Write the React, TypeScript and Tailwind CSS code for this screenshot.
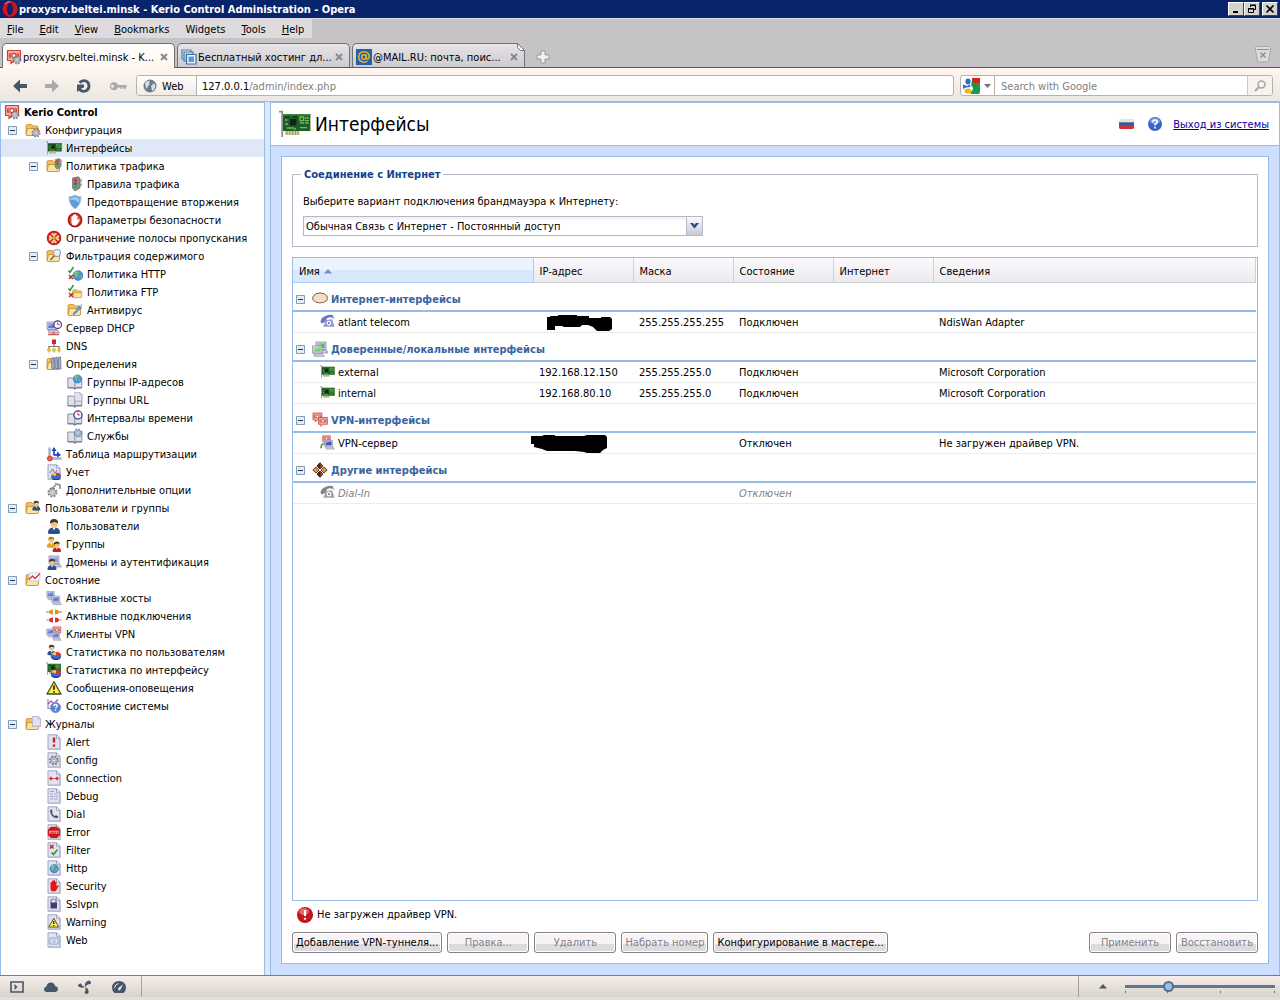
import { Fragment, useState } from "react";
import type { ReactNode } from "react";

/* ---------- icon parts, all on a 16x16 grid ---------- */

function Folder() {
  return (
    <g stroke="#c08a2e" strokeWidth=".8">
      <path d="M1 4q0-1.500 1.500-1.500h4l1.500 1.500h4q1 0 1 1v8H2.500Q1 13 1 12z" fill="#f0bf5c" />
      <path d="M1 13 2.500 6.500h11V12q0 1.500-1.500 1.500H2z" fill="#fbe3a0" />
    </g>
  );
}

function Page() {
  return (
    <g stroke="#9a9dbd" strokeWidth=".9">
      <path d="M2 .8h8.500L14 4.300v10.900H2z" fill="#e0e2f2" />
      <path d="M10.500.8v3.500H14z" fill="#fff" />
      <path d="M14 5v10.200H2.500" fill="none" stroke="#b9bbd4" strokeWidth="1.500" />
    </g>
  );
}

function Book() {
  return (
    <g stroke="#77798a" strokeWidth=".8">
      <path d="M.8 4h5l2 1 2-1h5v9.500h-5l-2 1-2-1h-5z" fill="#dfe0e8" />
      <path d="M7.800 5v9.500" />
      <path d="M.8 13.800h5l2 1.200 2-1.200h5" fill="none" strokeWidth="1.300" />
    </g>
  );
}

function Monitor({ fill = "#5f79e0" }: { fill?: string }) {
  return (
    <g>
      <path d="M1 2h10v7.500H1z" fill="#dcdde8" stroke="#7c7f98" strokeWidth=".7" />
      <path d="M2.200 3.200h7.600v5H2.200z" fill={fill} />
      <path d="M2.200 3.200h7.600l-7.600 3z" fill="#fff" opacity=".35" />
      <path d="M2 10h9.500l2 3H3z" fill="#c9cad6" stroke="#7c7f98" strokeWidth=".6" />
    </g>
  );
}

function Person({ body = "#2b4f8e", hair = "#3b3b33" }: { body?: string; hair?: string }) {
  return (
    <g>
      <path d="M2 15.500q-.5-6 6-6t6 6q-6 1.500-12 0z" fill={body} />
      <path d="m6.500 9.500 1.500 3 1.500-3z" fill="#fff" />
      <circle cx="8" cy="5.500" r="3.600" fill="#f3c07a" />
      <path d="M4 5.500Q3.500 1 8 1t4 4.500Q10 3.500 8 4T4 5.500z" fill={hair} />
    </g>
  );
}

function Globe() {
  return (
    <g>
      <circle cx="8" cy="8" r="6.500" fill="#4a90e8" stroke="#2660b8" strokeWidth=".8" />
      <path d="M3 6q2-4 6-3l1 2-3 1 1 2-2 3q-3-1-3-5zM10 8l3-1-1 4-2 1z" fill="#6cc65a" />
      <path d="M4 4q2-2 4-2-3 2-4 4z" fill="#fff" opacity=".6" />
    </g>
  );
}

function Clock() {
  return (
    <g>
      <circle cx="8" cy="8" r="6.500" fill="#fff" stroke="#3c3590" strokeWidth="2" />
      <path d="M8 4v4h3.500" fill="none" stroke="#d22" strokeWidth="1.500" />
    </g>
  );
}

function Gear({ fill = "#c4c6cc", stroke = "#7b7d84" }: { fill?: string; stroke?: string }) {
  return (
    <g>
      <circle cx="8" cy="8" r="5.600" fill="none" stroke={stroke} strokeWidth="3.400" strokeDasharray="2.400 2" />
      <circle cx="8" cy="8" r="4.800" fill={fill} stroke={stroke} strokeWidth=".9" />
      <circle cx="8" cy="8" r="1.800" fill="#fff" stroke={stroke} strokeWidth=".8" />
    </g>
  );
}

function Pie() {
  return (
    <g>
      <ellipse cx="8" cy="9.500" rx="7.500" ry="5.500" fill="#20398c" />
      <ellipse cx="8" cy="8" rx="7.500" ry="5" fill="#4468c8" />
      <path d="M8 8 1 6q2-3 7-3z" fill="#f3d34a" />
      <path d="M8 8V3q7 0 7.500 5z" fill="#e0342a" />
    </g>
  );
}

function Card() {
  return (
    <g>
      <path d="M0 1.800h1.600v12.700" fill="none" stroke="#8d8d96" strokeWidth=".9" />
      <path d="M2 3h13.700v8.500H2z" fill="#1f5f26" />
      <path d="M2 3h13.700v.8H2z" fill="#3c8a3c" />
      <path d="M3 11.500h7.200v2H3z" fill="#d6cf9c" />
      <path d="M4 11.500v2M5.400 11.500v2M6.800 11.500v2M8.200 11.500v2M9.500 11.500v2" stroke="#7f8450" strokeWidth=".4" />
      <path d="M5.500 5.500h3.200v3.200H5.500z" fill="#16211c" />
      <path d="M10.500 4.500h1.800v1.800h-1.800zM13 5h2M10.500 7.500h2M13 7.500h1.800M10.500 9.800h3.500M13 6.300h2M3 6h1.200M3 8h1.500M4 10h3.500M8 10v1" fill="none" stroke="#74b860" strokeWidth=".7" />
      <path d="M3 4.500h2M7 4.500h2" stroke="#0f3a16" strokeWidth=".7" />
    </g>
  );
}

function Kerio() {
  return (
    <g>
      <path d="M1.500 1.500h13v10H8L5 14.500v-3H1.500z" fill="#f1b0a8" stroke="#cf4037" strokeWidth="1.200" strokeLinejoin="round" />
      <path d="M4.500 4q-2 2.500 0 5M11.500 4q2 2.500 0 5" fill="none" stroke="#c93a33" strokeWidth="1.200" />
      <circle cx="8" cy="6.500" r="2.200" fill="#fff" stroke="#c93a33" strokeWidth="1.200" />
    </g>
  );
}

function Phone({ fill }: { fill: string }) {
  return (
    <g>
      <path d="M.5 8.500Q.5 3 8.500 1q5-.8 6 1l-1.500 2-3-.5-2.500 1-2 4-3.500 1.500z" fill={fill} />
      <path d="M6.500 6.500 13 5.500l2.500 8H3.500z" fill={fill} opacity=".75" />
      <circle cx="9.500" cy="9.700" r="2.500" fill="#fff" />
      <circle cx="9.500" cy="9.700" r="1.200" fill={fill} />
      <path d="M13 3.500q2.500-.5 2 2" fill="none" stroke={fill} strokeWidth=".7" />
    </g>
  );
}

function Hand({ fill }: { fill: string }) {
  return (
    <path
      d="M4.500 8V4.500q.8-1 1.400 0V3q.8-1 1.500 0v-.5q.8-1 1.600 0V4q.8-1 1.500 0v4.500l1.500-1.500q1.200 0 .6 1.200L10.500 12q-1 1.500-3 1.500-3 0-3-3z"
      fill={fill}
    />
  );
}

function Lights() {
  return (
    <g>
      <path d="m3.500 2 6-1.200 1.500 1.500V12l-5 3-2.500-3z" fill="#8b8e92" stroke="#55585c" strokeWidth=".6" />
      <circle cx="6.500" cy="4.200" r="1.900" fill="#e33b28" />
      <circle cx="6.500" cy="7.700" r="1.500" fill="#5b5e50" />
      <circle cx="6.500" cy="11" r="1.700" fill="#3fb143" />
      <path d="m11 4 2-1v2l-2 2M11 8l2-1v2l-2 2" fill="#9a9c9f" />
    </g>
  );
}

function Warning() {
  return (
    <g>
      <path d="M8 1.800 15 14H1z" fill="#f8ee4c" stroke="#4c4a25" strokeWidth="1.300" strokeLinejoin="round" />
      <path d="M8 5.500v4.300M8 11.200v1.500" stroke="#222" strokeWidth="1.700" />
    </g>
  );
}

function Marks() {
  return (
    <g fill="none" strokeWidth="1.500">
      <path d="m1.500 4.500 1.500 2 3.500-5.500" stroke="#2e9b33" />
      <path d="m2 9 4 4M6 9l-4 4" stroke="#c62828" />
    </g>
  );
}

const ICONS: Record<string, ReactNode> = {
  kerio: <><Kerio /><g transform="translate(6 6) scale(.62)"><Gear /></g></>,
  config: <><Folder /><g transform="translate(6 6) scale(.62)"><Gear /></g></>,
  card: <Card />,
  folderLights: <><Folder /><g transform="translate(6.500 0) scale(.75)"><Lights /></g></>,
  lights: <g transform="translate(2 0)"><Lights /></g>,
  shield: (
    <g>
      <path d="M8 1q3 2 6 1.500.5 8-6 12.500Q1.500 10.500 2 2.500 5 3 8 1z" fill="#5d9bd8" stroke="#b6c8da" />
      <path d="M8 2.500q2.500 1.500 4.500 1.500 0 2.500-1 5-3-4-8-3l-.3-2Q6 3.800 8 2.500z" fill="#9ccaf0" />
    </g>
  ),
  hand: (
    <g>
      <circle cx="8" cy="8" r="6.600" fill="#d94a42" stroke="#b81414" strokeWidth="1.600" />
      <Hand fill="#fff" />
    </g>
  ),
  limit: (
    <g>
      <circle cx="8" cy="8" r="6.300" fill="#f6e0b4" stroke="#cc1c1c" strokeWidth="2" />
      <path d="M3.500 3.500 12.500 12.500M12.500 3.500 3.500 12.500" stroke="#cc1c1c" strokeWidth="1.500" />
      <path d="M8 5.500 10.500 8 8 10.500 5.500 8z" fill="#d9a33a" />
      <path d="M8 2.500v2M8 11.500v2M2.500 8h2M11.500 8h2" stroke="#a8522a" />
    </g>
  ),
  filter: (
    <>
      <Folder />
      <circle cx="11" cy="5" r="3.500" fill="#e8f0fb" stroke="#9aa2b8" strokeWidth="1.200" />
      <path d="m8.500 7.500-4 4.500" stroke="#9a6a2a" strokeWidth="1.600" />
    </>
  ),
  http: <><g transform="translate(5 3.500) scale(.75)"><Globe /></g><Marks /></>,
  ftp: <><g transform="translate(5 4) scale(.72)"><Folder /></g><Marks /></>,
  antivirus: (
    <>
      <Folder />
      <path d="m6 12 6-7 1.500 1.500L7 12.500z" fill="#7fb4ec" stroke="#2c66b4" strokeWidth=".8" />
      <path d="m11 3.500 4 3M13 5l2-2.500" stroke="#7c94c8" strokeWidth="1.200" />
    </>
  ),
  dhcp: (
    <>
      <Monitor />
      <g transform="translate(7 0) scale(.58)"><Clock /></g>
      <path d="M2 14.500h11M7.500 12v3" stroke="#d9534f" strokeWidth="1.600" />
    </>
  ),
  dns: (
    <g>
      <path d="M8 5v4M3 11V8.500h10V11" fill="none" stroke="#787878" strokeWidth="1.200" />
      <path d="M6 1.500h4v4.500H6z" fill="#d8241d" />
      <path d="M3 9.500 4.800 12 3 14.500 1.200 12zM8 9.500l1.800 2.500L8 14.500 6.200 12zM13 9.500l1.800 2.500-1.800 2.500-1.800-2.500z" fill="#eccc28" stroke="#9c8420" strokeWidth=".4" />
    </g>
  ),
  definitions: (
    <>
      <Folder />
      <path d="m5 2.500 2.500-1 1 11H6zM8.500 2 11 1l1 11.500H9.500zM12 1.500l2.500-.5.500 12h-2.500z" fill="#a4aed2" stroke="#5f6890" strokeWidth=".7" />
    </>
  ),
  bookGlobe: <><Book /><g transform="translate(5.500 0) scale(.62)"><Globe /></g></>,
  bookPage: <><Book /><g transform="translate(6.500 0) scale(.6)"><Page /></g></>,
  bookClock: <><Book /><g transform="translate(6 0) scale(.62)"><Clock /></g></>,
  bookGear: <><Book /><g transform="translate(6 0) scale(.62)"><Gear fill="#a9c4e6" stroke="#6b8bb5" /></g></>,
  routing: (
    <g>
      <path d="M3.500 12V1.500M4 12.500h11.500" stroke="#a9adc4" strokeWidth="2.400" />
      <path d="M8 9.500V5" stroke="#1c3fd0" strokeWidth="1.600" />
      <path d="M5.500 5 8 1l2.500 4zM8 8h3V5.500L15 9l-4 2.500V9.800H8z" fill="#1c3fd0" />
      <circle cx="3.800" cy="12.500" r="2.500" fill="#ef5c5c" stroke="#b82828" strokeWidth=".7" />
    </g>
  ),
  accounting: <><Page /><path d="M4 9 6.500 5 9 9.500 11 6" fill="none" stroke="#777a99" /><g transform="translate(5 7) scale(.62)"><Pie /></g></>,
  options: (
    <>
      <g transform="translate(1 5) scale(.68)"><Gear fill="#d8d8da" stroke="#77777b" /></g>
      <path d="m4 8 6-5M9 1.500l5 1.500v4" fill="none" stroke="#8a8a8e" strokeWidth="1.600" />
    </>
  ),
  usersFolder: <><Folder /><g transform="translate(6 0) scale(.66)"><Person /></g></>,
  user: <Person />,
  groups: (
    <>
      <g transform="translate(-.500 0) scale(.72)"><Person body="#e2a31e" hair="#c07b12" /></g>
      <g transform="translate(5.200 4.800) scale(.7)"><Person body="#c71f1f" hair="#4a2a1a" /></g>
    </>
  ),
  domains: <><g transform="translate(2 0)"><Monitor fill="#8299e6" /></g><g transform="translate(0 4) scale(.75)"><Person /></g></>,
  state: <><Folder /><path d="M4 .8h11V9H4z" fill="#f3f4fb" stroke="#b9bccf" strokeWidth=".6" /><path d="M4 7.500 7.500 4 10 6.500 15 1.500" fill="none" stroke="#d03648" strokeWidth="1.300" /></>,
  hosts: <><g transform="translate(0 0) scale(.75)"><Monitor /></g><g transform="translate(5 4.500) scale(.78)"><Monitor /></g></>,
  connections: (
    <g>
      <path d="M0 4h4M12 4h4" stroke="#8a8a60" strokeWidth="1.100" />
      <path d="M3 4q0-2.500 4-2.500v5Q3 6.500 3 4zM13 4q0-2.500-4-2.500v5q4 0 4-2.500z" fill="#d99a1e" />
      <path d="M0 12h4M12 12h4" stroke="#e88a84" strokeWidth="1.100" />
      <path d="M3 12q0-2.500 4-2.500v5Q3 14.500 3 12zM13 12q0-2.500-4-2.500v5q4 0 4-2.500z" fill="#d9342b" />
    </g>
  ),
  vpnClients: (
    <>
      <g transform="translate(6 0) scale(.6)"><Kerio /></g>
      <g transform="translate(0 1.500) scale(.72)"><Monitor /></g>
      <g transform="translate(5.500 5) scale(.72)"><Monitor /></g>
    </>
  ),
  userStats: <><g transform="translate(0 0) scale(.7)"><Person /></g><g transform="translate(4.500 6) scale(.68)"><Pie /></g></>,
  cardStats: <><g transform="translate(0 -1) scale(.95)"><Card /></g><g transform="translate(4.500 6) scale(.68)"><Pie /></g></>,
  warning: <Warning />,
  health: (
    <>
      <path d="M2 1v9.500h7" fill="none" stroke="#8b8fb0" strokeWidth="1.200" />
      <path d="m2 6 3-3 3 2.500 4-4" fill="none" stroke="#b03cae" strokeWidth="1.200" />
      <circle cx="9.500" cy="9.500" r="5.200" fill="#5a80d2" stroke="#8ea6e0" />
      <path d="M7.700 8.200q0-1.700 1.800-1.700t1.800 1.500q0 1-1.800 2M9.500 11.300v1.400" fill="none" stroke="#fff" strokeWidth="1.400" />
    </>
  ),
  logs: <><Folder /><g transform="translate(6 0) scale(.68)"><Page /></g></>,
  alert: <><Page /><path d="M8 3.500v5M8 10.500v2.300" stroke="#d01818" strokeWidth="2.300" /></>,
  logConfig: <><Page /><g transform="translate(2.500 3) scale(.68)"><Gear /></g></>,
  connection: <><Page /><path d="M2.500 8.500h11" stroke="#d8504a" strokeWidth=".8" /><path d="m4.200 6.300 3 2.200-3 2.200zM11.800 6.300l-3 2.200 3 2.200z" fill="#d8241d" /></>,
  debug: <><Page /><path d="M4 6h3M8 6h4M4 8.500h4M9 8.500h3M4 11h3M8 11h4M4 3.500h4" stroke="#a0a6cf" /></>,
  dial: <><Page /><path d="M4 5q0-2 2-1.500L6.500 6 6 7q1 2.500 3 3l1-.8 2.300 1q0 2-1.800 2Q5 11.500 4 5z" fill="#4f5361" /></>,
  error: (
    <>
      <Page />
      <path d="M5 2.800h6l3.200 3V11L11 14H5l-3.200-3V5.800z" fill="#cb1717" />
      <path d="M3.500 7v3M5 7v3M7 7v3M9 7v3M10.500 7v3M12.300 7v3M3.500 7.200h9" stroke="#f7c8c8" strokeWidth=".7" />
    </>
  ),
  logFilter: <><Page /><path d="m4 3 3.500 3.500M7.500 3 4 6.500" stroke="#c62828" strokeWidth="1.500" /><path d="m5.500 10.500 2 2 4-5" fill="none" stroke="#2e9b33" strokeWidth="1.700" /></>,
  logHttp: <><Page /><g transform="translate(3 3.500) scale(.65)"><Globe /></g></>,
  security: <><Page /><Hand fill="#e01515" /></>,
  sslvpn: <><Page /><path d="M5 7V5q0-2 2.500-2T10 5v2" fill="none" stroke="#7b7fa0" strokeWidth="1.200" /><path d="M4.500 6.500h6.500v6H4.500z" fill="#3c406e" /></>,
  logWarning: <><Page /><g transform="translate(2 3) scale(.72)"><Warning /></g></>,
  logWeb: <><Page /><path d="M4 6h8v6H4z" fill="#fff" stroke="#7e9ad0" /><path d="M5.500 8h5M5.500 10h5" stroke="#7e9ad0" /></>,
  cloud: (
    <path
      d="M3 4Q3.500 1.800 6 2.500q2-1.500 4 0 3-.5 3.500 1.500 2.300.7 1.800 3.500.2 2.500-2.300 3-1.500 1.800-3.500 1-2 1-3.500 0-2.500.5-3.500-1.500Q.2 9 .7 7 .8 4.500 3 4z"
      fill="#f8dcc4"
      stroke="#7d6252"
    />
  ),
  trusted: (
    <>
      <g transform="translate(3 -1)"><Monitor fill="#58b868" /></g>
      <g transform="translate(-.500 3) scale(.95)"><Monitor fill="#7cd082" /></g>
    </>
  ),
  vpnGroup: <><g transform="translate(0 0) scale(.68)"><Kerio /></g><g transform="translate(5.500 4.500) scale(.68)"><Kerio /></g></>,
  vpnServer: <><g transform="translate(2 0) scale(.62)"><Kerio /></g><g transform="translate(4 4) scale(.85)"><Monitor fill="#3b52d4" /></g><path d="M1 14q0-4 3-5" fill="none" stroke="#4a9a4a" strokeWidth="1.600" /></>,
  other: (
    <g stroke="#3a1a10" strokeWidth=".8">
      <path d="M8 .8 11 4 8 7 5 4zM8 9l3 3-3 3.200L5 12z" fill="#b8442a" />
      <path d="M4 5l3 3-3 3L.8 8zM12 5l3.200 3L12 11 9 8z" fill="#e2983c" />
      <path d="M8 .8V7L5 4zM8 9v6.200L5 12z" fill="#5a2418" />
    </g>
  ),
  phone: <Phone fill="#6a76c4" />,
  phoneOff: <Phone fill="#858585" />,
};

function Icon({ name, className = "size-4" }: { name: string; className?: string }) {
  return (
    <svg viewBox="0 0 16 16" className={`${className} shrink-0`} aria-hidden="true">
      {ICONS[name]}
    </svg>
  );
}

function Toggle() {
  return (
    <svg viewBox="0 0 9 9" className="size-[9px] shrink-0" aria-hidden="true">
      <path d="M.5.5h8v8h-8z" fill="#e4ecf5" stroke="#7f9db9" />
      <path d="M2 4.500h5" stroke="#22324a" />
    </svg>
  );
}

/* ---------- data ---------- */

type Node = { level: number; icon: string; label: string; open?: boolean };

const TREE: Node[] = [
  { level: 1, icon: "config", label: "Конфигурация", open: true },
  { level: 2, icon: "card", label: "Интерфейсы" },
  { level: 2, icon: "folderLights", label: "Политика трафика", open: true },
  { level: 3, icon: "lights", label: "Правила трафика" },
  { level: 3, icon: "shield", label: "Предотвращение вторжения" },
  { level: 3, icon: "hand", label: "Параметры безопасности" },
  { level: 2, icon: "limit", label: "Ограничение полосы пропускания" },
  { level: 2, icon: "filter", label: "Фильтрация содержимого", open: true },
  { level: 3, icon: "http", label: "Политика HTTP" },
  { level: 3, icon: "ftp", label: "Политика FTP" },
  { level: 3, icon: "antivirus", label: "Антивирус" },
  { level: 2, icon: "dhcp", label: "Сервер DHCP" },
  { level: 2, icon: "dns", label: "DNS" },
  { level: 2, icon: "definitions", label: "Определения", open: true },
  { level: 3, icon: "bookGlobe", label: "Группы IP-адресов" },
  { level: 3, icon: "bookPage", label: "Группы URL" },
  { level: 3, icon: "bookClock", label: "Интервалы времени" },
  { level: 3, icon: "bookGear", label: "Службы" },
  { level: 2, icon: "routing", label: "Таблица маршрутизации" },
  { level: 2, icon: "accounting", label: "Учет" },
  { level: 2, icon: "options", label: "Дополнительные опции" },
  { level: 1, icon: "usersFolder", label: "Пользователи и группы", open: true },
  { level: 2, icon: "user", label: "Пользователи" },
  { level: 2, icon: "groups", label: "Группы" },
  { level: 2, icon: "domains", label: "Домены и аутентификация" },
  { level: 1, icon: "state", label: "Состояние", open: true },
  { level: 2, icon: "hosts", label: "Активные хосты" },
  { level: 2, icon: "connections", label: "Активные подключения" },
  { level: 2, icon: "vpnClients", label: "Клиенты VPN" },
  { level: 2, icon: "userStats", label: "Статистика по пользователям" },
  { level: 2, icon: "cardStats", label: "Статистика по интерфейсу" },
  { level: 2, icon: "warning", label: "Сообщения-оповещения" },
  { level: 2, icon: "health", label: "Состояние системы" },
  { level: 1, icon: "logs", label: "Журналы", open: true },
  { level: 2, icon: "alert", label: "Alert" },
  { level: 2, icon: "logConfig", label: "Config" },
  { level: 2, icon: "connection", label: "Connection" },
  { level: 2, icon: "debug", label: "Debug" },
  { level: 2, icon: "dial", label: "Dial" },
  { level: 2, icon: "error", label: "Error" },
  { level: 2, icon: "logFilter", label: "Filter" },
  { level: 2, icon: "logHttp", label: "Http" },
  { level: 2, icon: "security", label: "Security" },
  { level: 2, icon: "sslvpn", label: "Sslvpn" },
  { level: 2, icon: "logWarning", label: "Warning" },
  { level: 2, icon: "logWeb", label: "Web" },
];

const INDENT: Record<number, string> = { 1: "pl-[7px]", 2: "pl-7", 3: "pl-[49px]" };

type Row = { icon: string; name: string; ip?: ReactNode; mask?: string; state: string; info?: string; off?: boolean };

const GROUPS: { icon: string; title: string; rows: Row[] }[] = [
  {
    icon: "cloud",
    title: "Интернет-интерфейсы",
    rows: [
      {
        icon: "phone",
        name: "atlant telecom",
        ip: (
          <svg viewBox="0 0 66 16" className="ml-2 h-4 w-[66px]" aria-hidden="true">
            <path d="M0 2h3V1h8V0h19v1h12v2h12V2h9l2 2v10l-3 2H50l-4-4-5-2h-6l-2 2H17l-2-1H8v4H0z" fill="#000" />
          </svg>
        ),
        mask: "255.255.255.255",
        state: "Подключен",
        info: "NdisWan Adapter",
      },
    ],
  },
  {
    icon: "trusted",
    title: "Доверенные/локальные интерфейсы",
    rows: [
      { icon: "card", name: "external", ip: "192.168.12.150", mask: "255.255.255.0", state: "Подключен", info: "Microsoft Corporation" },
      { icon: "card", name: "internal", ip: "192.168.80.10", mask: "255.255.255.0", state: "Подключен", info: "Microsoft Corporation" },
    ],
  },
  {
    icon: "vpnGroup",
    title: "VPN-интерфейсы",
    rows: [
      {
        icon: "vpnServer",
        name: "VPN-сервер",
        ip: (
          <svg viewBox="0 0 77 18" className="-ml-2 h-[18px] w-[77px]" aria-hidden="true">
            <path d="M0 1h11l2-1h10l2 1h28l3-1h18l2 2v11l-4 2-3 3H56l-3-1-9-1H16l-5-2-8-2V9H0z" fill="#000" />
          </svg>
        ),
        state: "Отключен",
        info: "Не загружен драйвер VPN.",
      },
    ],
  },
  {
    icon: "other",
    title: "Другие интерфейсы",
    rows: [{ icon: "phoneOff", name: "Dial-In", state: "Отключен", off: true }],
  },
];

const COLUMNS = ["IP-адрес", "Маска", "Состояние", "Интернет", "Сведения"];
const MENU = ["File", "Edit", "View", "Bookmarks", "Widgets", "Tools", "Help"];

/* ---------- browser chrome ---------- */

function TitleBar() {
  const button =
    "flex h-[14px] w-4 items-center justify-center border border-t-white border-l-white border-r-[#404040] border-b-[#404040] bg-[#d6d3ce]";
  return (
    <header className="flex h-[18px] items-center bg-[#08246b] pr-0.5 pl-0.5 text-white">
      <svg viewBox="0 0 16 16" className="size-4 shrink-0" aria-hidden="true">
        <ellipse cx="8" cy="8" rx="7.500" ry="8" fill="#d3131b" />
        <ellipse cx="8" cy="8" rx="3" ry="6" fill="#08246b" />
        <path d="M3 3q2-2.500 5-2.500" stroke="#f38a8a" fill="none" />
      </svg>
      <h1 className="ml-px flex-1 pt-0.5 text-[11px] font-bold">proxysrv.beltei.minsk - Kerio Control Administration - Opera</h1>
      <button aria-label="Minimize" className={button}>
        <svg viewBox="0 0 10 10" className="size-[10px]"><path d="M2 8h5" stroke="#000" strokeWidth="2" /></svg>
      </button>
      <button aria-label="Restore" className={button}>
        <svg viewBox="0 0 10 10" className="size-[10px]">
          <path d="M3.500 3V1.500h5v4H7M3 1h6M1.500 4.500h5v4h-5zM1 5h6" fill="none" stroke="#000" />
        </svg>
      </button>
      <button aria-label="Close" className={`${button} ml-0.5`}>
        <svg viewBox="0 0 10 10" className="size-[10px]"><path d="m1.500 1.500 7 7M8.500 1.500l-7 7" stroke="#000" strokeWidth="1.600" /></svg>
      </button>
    </header>
  );
}

function MenuBar() {
  return (
    <nav className="flex h-5 border-t border-[#e0dde0] bg-[#c6c3c6]">
      <div className="flex items-center bg-[#dedbde]">
        {MENU.map((m) => {
          const at = m === "Widgets" ? 3 : 0;
          return (
            <button key={m} className="px-2 pt-0.5 first:pl-[7px]">
              {m.slice(0, at)}
              <u className="underline-offset-1">{m[at]}</u>
              {m.slice(at + 1)}
            </button>
          );
        })}
      </div>
    </nav>
  );
}

function TabIcon({ kind }: { kind: string }) {
  if (kind === "kerio") return <Icon name="kerio" />;
  return (
    <svg viewBox="0 0 16 16" className="size-4 shrink-0" aria-hidden="true">
      {kind === "hosting" ? (
        <g strokeWidth="1.200">
          <path d="M1 1h9v9H1z" fill="#d6e8f8" stroke="#4a7cb8" />
          <path d="M3 3h9v9H3z" fill="#b8dca8" stroke="#4a7cb8" />
          <path d="M5.500 5.500H15V15H5.500z" fill="#eef5fc" stroke="#3a6cac" />
          <path d="M7.500 7.500H13V13H7.500z" fill="#5c9ade" />
        </g>
      ) : (
        <g fill="none" stroke="#f0b02c" strokeWidth="1.500">
          <path d="M0 0h16v16H0z" fill="#1f62a8" stroke="none" />
          <circle cx="8" cy="8" r="2.300" />
          <path d="M10.300 5.500v3.800q1.700 1.700 2.900-.8Q13.500 2.800 8 2.800T2.800 8Q3 13.200 8 13.200q2 0 3.500-1" />
        </g>
      )}
    </svg>
  );
}

function Tabs() {
  const tabs = [
    { kind: "kerio", label: "proxysrv.beltei.minsk - K..." },
    { kind: "hosting", label: "Бесплатный хостинг дл..." },
    { kind: "mail", label: "@MAIL.RU: почта, поис..." },
  ];
  return (
    <div className="flex h-[30px] items-end border-b border-[#5a5a5a] bg-[#c6c3c6] pl-0.5">
      <div role="tablist" className="flex h-6 gap-[2px]">
        {tabs.map((t, i) => (
          <div
            key={t.kind}
            className={`relative flex w-[173px] items-center rounded-t-[5px] border border-b-0 border-[#737173] pt-0.5 pr-1.5 pl-[3px] ${
              i === 0 ? "-mb-px h-[25px] bg-linear-to-b from-white to-[#fff7ef]" : "bg-linear-to-b from-[#e7e3e7] to-[#ceccce]"
            }`}
          >
            <TabIcon kind={t.kind} />
            <button role="tab" aria-selected={i === 0} className="ml-px flex-1 pt-0.5 text-left whitespace-nowrap">
              {t.label}
            </button>
            <button aria-label="Close tab" className="shrink-0">
              <svg viewBox="0 0 8 8" className="size-2"><path d="m1 1 6 6M7 1 1 7" stroke="#848a92" strokeWidth="2" /></svg>
            </button>
            {/* folded corner of a page that was not read yet */}
            {t.kind === "mail" && (
              <svg viewBox="0 0 8 8" className="absolute -top-px -right-px size-2" aria-hidden="true">
                <path d="M0 0h8v8z" fill="#c6c3c6" />
                <path d="M.5.5v4l3 3h4z" fill="#fff" stroke="#737173" />
              </svg>
            )}
          </div>
        ))}
      </div>
      <button aria-label="New tab" className="mb-[3px] ml-[11px]">
        <svg viewBox="0 0 14 14" className="size-[14px]">
          <path d="M5 1h4v4h4v4H9v4H5V9H1V5h4z" fill="#f4f3f4" stroke="#9c9a9c" strokeLinejoin="round" />
        </svg>
      </button>
      <button aria-label="Closed tabs" className="mr-2 mb-1 ml-auto">
        <svg viewBox="0 0 18 18" className="size-[18px]">
          <path d="M1.500 2.500q0-1 1-1h13q1 0 1 1V5l-2 11q0 1-1 1H4.500q-1 0-1-1L1.500 5z" fill="#dcdadc" stroke="#a8a6a8" />
          <path d="M3 4.500h12" stroke="#8e8c8e" />
          <path d="m6.500 7.500 5 5M11.500 7.500l-5 5" stroke="#8e8c8e" strokeWidth="1.500" />
        </svg>
      </button>
    </div>
  );
}

function Toolbar() {
  return (
    <div className="flex h-[34px] items-center border-b border-[#bdb8b5] bg-linear-to-b from-[#fff5ee] to-[#ebe7e1] pt-0.5 pr-[7px] pl-3">
      <div className="flex items-center gap-4">
        <button aria-label="Back">
          <svg viewBox="0 0 16 16" className="size-4"><path d="M1 8 8 1.500V6h7v4H8v4.500z" fill="#45576b" /></svg>
        </button>
        <button aria-label="Forward">
          <svg viewBox="0 0 16 16" className="size-4"><path d="M15 8 8 1.500V6H1v4h7v4.500z" fill="#a9abae" /></svg>
        </button>
        <button aria-label="Reload">
          <svg viewBox="0 0 16 16" className="size-4">
            <path d="M3.500 4.800Q6 2 9.500 2.800 13 4 13 8t-3.500 5Q6 14 3.500 11.500" fill="none" stroke="#45576b" strokeWidth="2.800" />
            <path d="M1 10V7l1-.5h6L8 9l-1 1z" fill="#45576b" />
            <path d="M1 6.500V14l6.500-5z" fill="#45576b" />
          </svg>
        </button>
        <button aria-label="Wand">
          <svg viewBox="0 0 20 16" className="h-4 w-5">
            <path d="M6 4.200a4.200 4 0 1 0 .01 0zm-1.500 2.500a1.500 1.500 0 1 1-.01 0z" fill="#a9abae" fillRule="evenodd" />
            <path d="M9 7h9l1 1-1 1.500h-.5V11h-2V9.500h-1.500V11h-1.500V9.500H9z" fill="#a9abae" />
          </svg>
        </button>
      </div>
      <form className="ml-2 flex h-[21px] flex-1 overflow-hidden rounded-[3px] border border-[#b5b2b0] bg-white" onSubmit={(e) => e.preventDefault()}>
        <button type="button" className="flex w-[60px] items-center gap-[5px] border-r border-[#b5b2b0] bg-linear-to-b from-white to-[#f0ebe6] pl-1.5">
          <svg viewBox="0 0 14 14" className="size-[14px]" aria-hidden="true">
            <circle cx="7" cy="7" r="6.500" fill="#6c7a88" />
            <path d="M2 4q2-3 5-2L6 4l1 1-2 2-1 3q-2-2-2-6zM8 7l3-3 1.500 3L11 11l-2 1z" fill="#d6dde2" />
          </svg>
          <span className="pt-0.5">Web</span>
        </button>
        <div className="relative flex-1">
          {/* the host part is drawn darker than the path */}
          <div aria-hidden="true" className="pointer-events-none absolute inset-0 flex items-center px-[5px] pt-0.5 text-[#808080]">
            <span className="text-black">127.0.0.1</span>/admin/index.php
          </div>
          <input aria-label="Address" defaultValue="127.0.0.1/admin/index.php" className="block h-full w-full bg-transparent px-[5px] pt-0.5 text-transparent caret-black outline-none" />
        </div>
      </form>
      <form className="ml-[6px] flex h-[21px] w-[313px] overflow-hidden rounded-[3px] border border-[#b5b2b0] bg-white" onSubmit={(e) => e.preventDefault()}>
        <button type="button" aria-label="Search engine" className="flex w-[34px] items-center gap-1 border-r border-[#b5b2b0] pl-0.5">
          <svg viewBox="0 0 17 16" className="h-4 w-[17px]">
            <path d="M9 0h8v14q0 2-2 2H7l3-6-2-3z" fill="#1a9a48" />
            <path d="M9 0h8v5h-7z" fill="#dd1f22" />
            <path d="M0 0h9L8 8l2 3-3 5H0z" fill="#fff" />
            <ellipse cx="5" cy="3.500" rx="2.600" ry="3" fill="#2a6cc8" />
            <path d="M0 6.500 4 8l3-1.500L7.500 9 3 9.500 0 11z" fill="#2a6cc8" />
            <ellipse cx="5" cy="13" rx="3.600" ry="2.500" fill="#f2b21c" />
          </svg>
          <svg viewBox="0 0 7 4" className="h-1 w-[7px]"><path d="M0 0h7L3.500 4z" fill="#737173" /></svg>
        </button>
        <input aria-label="Search with Google" placeholder="Search with Google" className="min-w-0 flex-1 px-1.5 pt-0.5 outline-none placeholder:text-[#808080]" />
        <button aria-label="Search" className="flex w-[25px] items-center justify-center border-l border-[#cfc8c4] bg-[#f8f2ee]">
          <svg viewBox="0 0 12 12" className="size-3"><g fill="none" stroke="#a9a6a4" strokeWidth="1.500"><circle cx="7.500" cy="4.500" r="3.500" /><path d="M5 7 1 11" strokeWidth="2" /></g></svg>
        </button>
      </form>
    </div>
  );
}

function StatusBar() {
  const [zoom, setZoom] = useState(27);
  const icon = "size-[14px]";
  return (
    <footer className="flex h-[25px] items-stretch border-t border-[#7b7d84] border-b-3 border-b-[#e2dfda] bg-linear-to-b from-[#f5eeea] to-[#d9d4cb]">
      <div className="flex w-[142px] items-center gap-5 border-r border-[#a5a29c] pl-2.5">
        <button aria-label="Panels">
          <svg viewBox="0 0 14 14" className={icon}><path d="M1 2h12v10H1z" fill="none" stroke="#45576b" strokeWidth="1.600" /><path d="m4.500 4 3 3-3 3z" fill="#45576b" /></svg>
        </button>
        <button aria-label="Link">
          <svg viewBox="0 0 14 14" className={icon}><path d="M3 12Q0 12 0 9.300 0 7 2.500 6.500 3 2.500 7 2.500q3.500 0 4 3.500 3 .5 3 3T11.500 12z" fill="#45576b" /></svg>
        </button>
        <button aria-label="Unite">
          <svg viewBox="0 0 14 14" className={icon}>
            <path d="M7 7Q6 2 11 .5q3 1 1.500 3.500Q9 4 7 7q-4 2-7-1 0-3 3-2.500Q4 6.500 7 7q4 1 3.500 6-3 2-4-.500Q8.500 10 7 7z" fill="#45576b" />
          </svg>
        </button>
        <button aria-label="Turbo">
          <svg viewBox="0 0 14 14" className={icon}><path d="M2.500 13Q0 11 0 7.500 .5 1 7 1t7 6.500Q14 11 11.500 13z" fill="#45576b" /><path d="M6 9.500q-.5-1.500 5-5-2.500 6-4 6z" fill="#eee8e4" /><path d="M2.500 8Q3 4 6.500 3.500" stroke="#eee8e4" fill="none" /></svg>
        </button>
      </div>
      <div className="ml-auto flex items-center border-l border-[#a5a29c] pr-[5px] pl-5">
        <button aria-label="View options">
          <svg viewBox="0 0 8 5" className="h-[5px] w-2"><path d="M0 4.500 4 0l4 4.500z" fill="#45576b" /></svg>
        </button>
        <div className="relative ml-[18px] flex w-[150px] items-center">
          <svg viewBox="0 0 150 2" className="absolute top-[10px] left-0 h-0.5 w-full" aria-hidden="true">
            <path d="M.5 0v2M42.500 0v2M95.500 0v2M149.500 0v2" stroke="#6b6b6b" />
          </svg>
          <input
            type="range"
            aria-label="Zoom"
            value={zoom}
            onChange={(e) => setZoom(Number(e.target.value))}
            className="relative h-3 w-full appearance-none bg-transparent [&::-webkit-slider-runnable-track]:h-[3px] [&::-webkit-slider-runnable-track]:bg-[#5f7893] [&::-webkit-slider-thumb]:-mt-1 [&::-webkit-slider-thumb]:size-[11px] [&::-webkit-slider-thumb]:appearance-none [&::-webkit-slider-thumb]:rounded-full [&::-webkit-slider-thumb]:border-2 [&::-webkit-slider-thumb]:border-[#4f6f93] [&::-webkit-slider-thumb]:bg-[#9dbfe0]"
          />
        </div>
      </div>
    </footer>
  );
}

/* ---------- administration page ---------- */

function Sidebar() {
  const [selected, setSelected] = useState("Интерфейсы");
  return (
    <aside className="w-[265px] shrink-0 border border-b-0 border-[#99bbe8] bg-white">
      <div className="flex h-[18px] items-center gap-1 pl-[3px] font-bold">
        <Icon name="kerio" />
        <span className="pt-0.5">Kerio Control</span>
      </div>
      <ul>
        {TREE.map((n) => (
          <li key={n.label}>
            <button
              onClick={() => setSelected(n.label)}
              className={`flex h-[18px] w-full items-center text-left whitespace-nowrap ${INDENT[n.level]} ${
                n.label === selected ? "bg-[#dfe8f6]" : ""
              }`}
            >
              <span className="w-[17px] shrink-0">{n.open && <Toggle />}</span>
              <Icon name={n.icon} className="mr-1 size-4" />
              <span className="pt-0.5">{n.label}</span>
            </button>
          </li>
        ))}
      </ul>
    </aside>
  );
}

function PushButton({ children, disabled }: { children: ReactNode; disabled?: boolean }) {
  return (
    <button
      disabled={disabled}
      className="h-[21px] min-w-[82px] rounded-[3px] border border-[#848284] bg-linear-to-b from-[#f7f3f7] from-55% to-[#dedbde] to-60% px-[3px] text-center whitespace-nowrap inset-ring inset-ring-white disabled:text-[#848284]"
    >
      {children}
    </button>
  );
}

function InterfaceTable() {
  return (
    <table className="w-full table-fixed border-collapse text-left">
      <colgroup>
        <col className="w-60" />
        <col className="w-[100px]" />
        <col className="w-[100px]" />
        <col className="w-[100px]" />
        <col className="w-[100px]" />
        <col />
      </colgroup>
      <thead>
        <tr className="h-6">
          <th className="border-r border-b border-[#aaccf6] bg-linear-to-b from-[#ebf3fd] from-50% to-[#d9e8fb] to-50% px-1.5 pt-1 font-normal">
            <span className="flex items-center gap-1">
              Имя
              <svg viewBox="0 0 8 5" className="h-[5px] w-2" aria-hidden="true"><path d="M0 4.500 4 0l4 4.500z" fill="#6593cf" /></svg>
            </span>
          </th>
          {COLUMNS.map((c) => (
            <th key={c} className="border-r border-b border-[#d0d0d0] bg-linear-to-b from-[#fbf9fc] to-[#ebeaee] px-1.5 pt-1 font-normal">
              {c}
            </th>
          ))}
        </tr>
      </thead>
      <tbody>
        {GROUPS.map((g) => (
          <Fragment key={g.title}>
            <tr className="h-[29px]">
              <th colSpan={6} className="border-b-2 border-[#99bbe8] pt-1.5 pl-[3px] font-bold text-[#3764a0]">
                <span className="flex items-center">
                  <Toggle />
                  <Icon name={g.icon} className="mr-[3px] ml-[7px] size-4" />
                  <span className="pt-0.5">{g.title}</span>
                </span>
              </th>
            </tr>
            {g.rows.map((r) => (
              <tr key={r.name} className={`h-[21px] border-b border-[#ededed] ${r.off ? "text-[#808080] italic" : ""}`}>
                <td className="pl-[27px]">
                  <span className="flex items-center gap-[3px]">
                    <Icon name={r.icon} className="size-[15px]" />
                    <span className="pt-0.5">{r.name}</span>
                  </span>
                </td>
                <td className="px-1.5 pt-0.5 whitespace-nowrap">
                  <div className="flex h-4 items-center">{r.ip}</div>
                </td>
                <td className="px-1.5 pt-0.5">{r.mask}</td>
                <td className="px-1.5 pt-0.5">{r.state}</td>
                <td />
                <td className="px-1.5 pt-0.5">{r.info}</td>
              </tr>
            ))}
          </Fragment>
        ))}
      </tbody>
    </table>
  );
}

function Main() {
  return (
    <main className="flex min-w-0 flex-1 flex-col border border-b-0 border-[#99bbe8] bg-[#cddeff]">
      <div className="flex h-[43px] items-center border-b border-[#99bbe8] bg-white pr-2.5 pl-2">
        <Icon name="card" className="size-8" />
        <h2 className="ml-1 flex-1 text-[19px]">Интерфейсы</h2>
        <button aria-label="Language">
          <svg viewBox="0 0 15 10" className="h-2.5 w-[15px]">
            <rect width="15" height="10" rx="1.500" fill="#e4e4e4" />
            <path d="M0 3.300h15v3.400H0z" fill="#2d5c9c" />
            <path d="M0 6h15v2.600q0 1.400-1.400 1.400H1.400Q0 10 0 8.600z" fill="#d03038" />
          </svg>
        </button>
        <button aria-label="Help" className="ml-[14px]">
          <svg viewBox="0 0 14 14" className="size-[14px]">
            <circle cx="7" cy="7" r="7" fill="#3566c8" />
            <ellipse cx="7" cy="4" rx="5" ry="3" fill="#7ea4ec" />
            <path d="M4.800 5.200q0-2.200 2.200-2.200t2.200 1.900q0 1.300-2.200 2.300v1.300M7 9.700v1.700" fill="none" stroke="#fff" strokeWidth="1.600" />
          </svg>
        </button>
        <a href="#logout" className="ml-[11px] pt-0.5 text-[#00009c] underline">Выход из системы</a>
      </div>

      <section className="m-2.5 mb-[11px] flex flex-1 flex-col border border-[#99bbe8] bg-white p-2.5">
        <fieldset className="border border-[#b5b8c8] px-2.5 pb-2.5">
          <legend className="ml-[-2px] h-[14px] px-[3px] pt-px font-bold text-[#15428b]">Соединение с Интернет</legend>
          <label htmlFor="link-type" className="mt-3.5 block">
            Выберите вариант подключения брандмауэра к Интернету:
          </label>
          <div className="relative mt-[7px] h-5 w-[400px] max-w-full">
            <select id="link-type" className="block h-full w-full appearance-none border border-[#b5b8c8] bg-linear-to-b from-[#eeeeee] from-0% to-white to-25% pt-0.5 pr-5 pl-0.5 outline-none">
              <option>Обычная Связь с Интернет - Постоянный доступ</option>
            </select>
            <span className="pointer-events-none absolute top-px right-px bottom-px flex w-4 items-center justify-center border-l border-[#b5b8c8] bg-linear-to-b from-[#fafafc] to-[#c8cad4]">
              <svg viewBox="0 0 9 6" className="h-1.5 w-[9px]" aria-hidden="true"><path d="M0 0h3l1.500 2L6 0h3L4.500 5.500z" fill="#24477f" /></svg>
            </span>
          </div>
        </fieldset>

        <div className="mt-2.5 flex-1 border border-[#99bbe8] pr-px">
          <InterfaceTable />
        </div>

        <p className="mt-[5px] flex h-[18px] items-center gap-1 pl-[5px]">
          <svg viewBox="0 0 16 16" className="size-4" aria-hidden="true">
            <circle cx="8" cy="8" r="8" fill="#c0161c" />
            <ellipse cx="7" cy="4.500" rx="5" ry="3.500" fill="#e0666a" />
            <path d="M8 3v6M8 10.800v2" stroke="#fff" strokeWidth="2.200" />
          </svg>
          Не загружен драйвер VPN.
        </p>
        <div className="mt-2 flex gap-[5px]">
          <PushButton>Добавление VPN-туннеля...</PushButton>
          <PushButton disabled>Правка...</PushButton>
          <PushButton disabled>Удалить</PushButton>
          <PushButton disabled>Набрать номер</PushButton>
          <PushButton>Конфигурирование в мастере...</PushButton>
          <span className="flex-1" />
          <PushButton disabled>Применить</PushButton>
          <PushButton disabled>Восстановить</PushButton>
        </div>
      </section>
    </main>
  );
}

export default function App() {
  return (
    <div className="flex min-h-screen flex-col bg-[#dce8f8] font-['DejaVu_Sans_Condensed','DejaVu_Sans',sans-serif] text-[11px] leading-[14px] text-black">
      <TitleBar />
      <MenuBar />
      <Tabs />
      <Toolbar />
      <div className="flex flex-1 gap-[5px]">
        <Sidebar />
        <Main />
      </div>
      <StatusBar />
    </div>
  );
}
